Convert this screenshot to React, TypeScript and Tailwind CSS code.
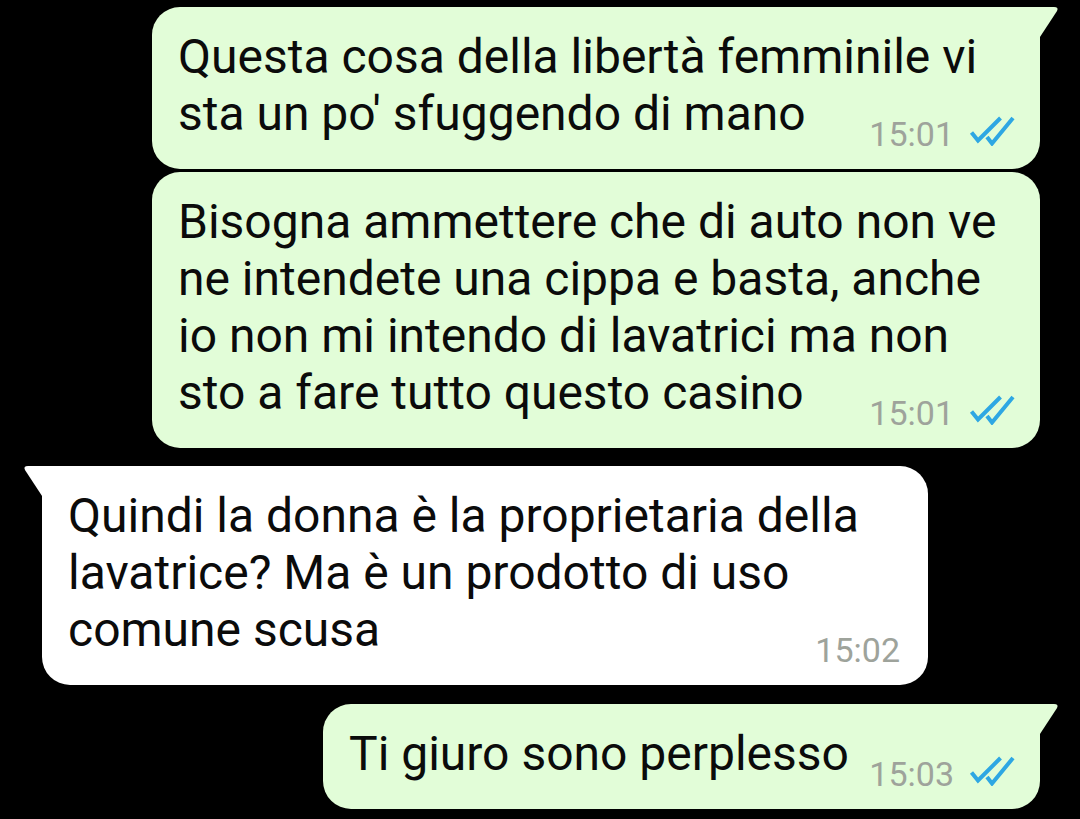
import type { ReactNode } from 'react';

const DoubleTick = () => (
    <svg width="46" height="30" viewBox="0 0 46 30" className="-translate-y-[3px]">
        <path d="M2.5 16.5 L9 24.5 L31.5 2" fill="none" stroke="#2ea7e3" strokeWidth="4" strokeLinejoin="miter" />
        <path d="M18 21 L23 27.5 L44 2" fill="none" stroke="#2ea7e3" strokeWidth="4" strokeLinejoin="miter" />
    </svg>
);

const TailRight = () => (
    <svg width="22" height="34" viewBox="0 0 22 34" className="absolute top-0 right-[-20px]">
        <path d="M0 0 L16 0 Q21 0 19 4 L0 33 Z" fill="#e2fdd8" />
    </svg>
);

const TailLeft = () => (
    <svg width="22" height="34" viewBox="0 0 22 34" className="absolute top-0 left-[-20px]">
        <path d="M22 0 L6 0 Q1 0 3 4 L22 33 Z" fill="#ffffff" />
    </svg>
);

type BubbleProps = {
    children: ReactNode;
    time: string;
    out?: boolean;
    tail?: boolean;
    className?: string;
};

const Bubble = ({ children, time, out = true, tail = false, className = '' }: BubbleProps) => {
    const corner = tail ? (out ? 'rounded-tr-none' : 'rounded-tl-none') : '';
    return (
        <div
            className={`relative rounded-[28px] ${corner} ${out ? 'bg-[#e2fdd8] self-end mr-[40px] pr-[25px]' : 'bg-white self-start ml-[42px] pr-[28px]'} pl-[26px] pt-[21px] pb-[16px] ${className}`}
        >
            {tail && (out ? <TailRight /> : <TailLeft />)}
            <p className="text-[48px] leading-[57px] text-[#0b0b0b]">{children}</p>
            <div className="flex items-center justify-end gap-[15px] mt-[-27px] h-[38px]">
                <span className="text-[34px] leading-[38px] text-[#9ea39b]">{time}</span>
                {out && <DoubleTick />}
            </div>
        </div>
    );
};

const App = () => {
    return (
        <div className="w-[1080px] h-[819px] bg-black overflow-hidden flex flex-col pt-[7px] font-['Roboto','Noto_Sans',sans-serif]">
            <Bubble time="15:01" tail className="w-[888px]">
                Questa cosa della libertà femminile vi
                <br />
                sta un po' sfuggendo di mano
            </Bubble>
            <Bubble time="15:01" className="w-[888px] mt-[3px]">
                Bisogna ammettere che di auto non ve
                <br />
                ne intendete una cippa e basta, anche
                <br />
                io non mi intendo di lavatrici ma non
                <br />
                sto a fare tutto questo casino
            </Bubble>
            <Bubble time="15:02" out={false} tail className="w-[886px] mt-[18px]">
                Quindi la donna è la proprietaria della
                <br />
                lavatrice? Ma è un prodotto di uso
                <br />
                comune scusa
            </Bubble>
            <Bubble time="15:03" tail className="w-[717px] mt-[19px]">
                Ti giuro sono perplesso
            </Bubble>
        </div>
    );
};

export default App;
